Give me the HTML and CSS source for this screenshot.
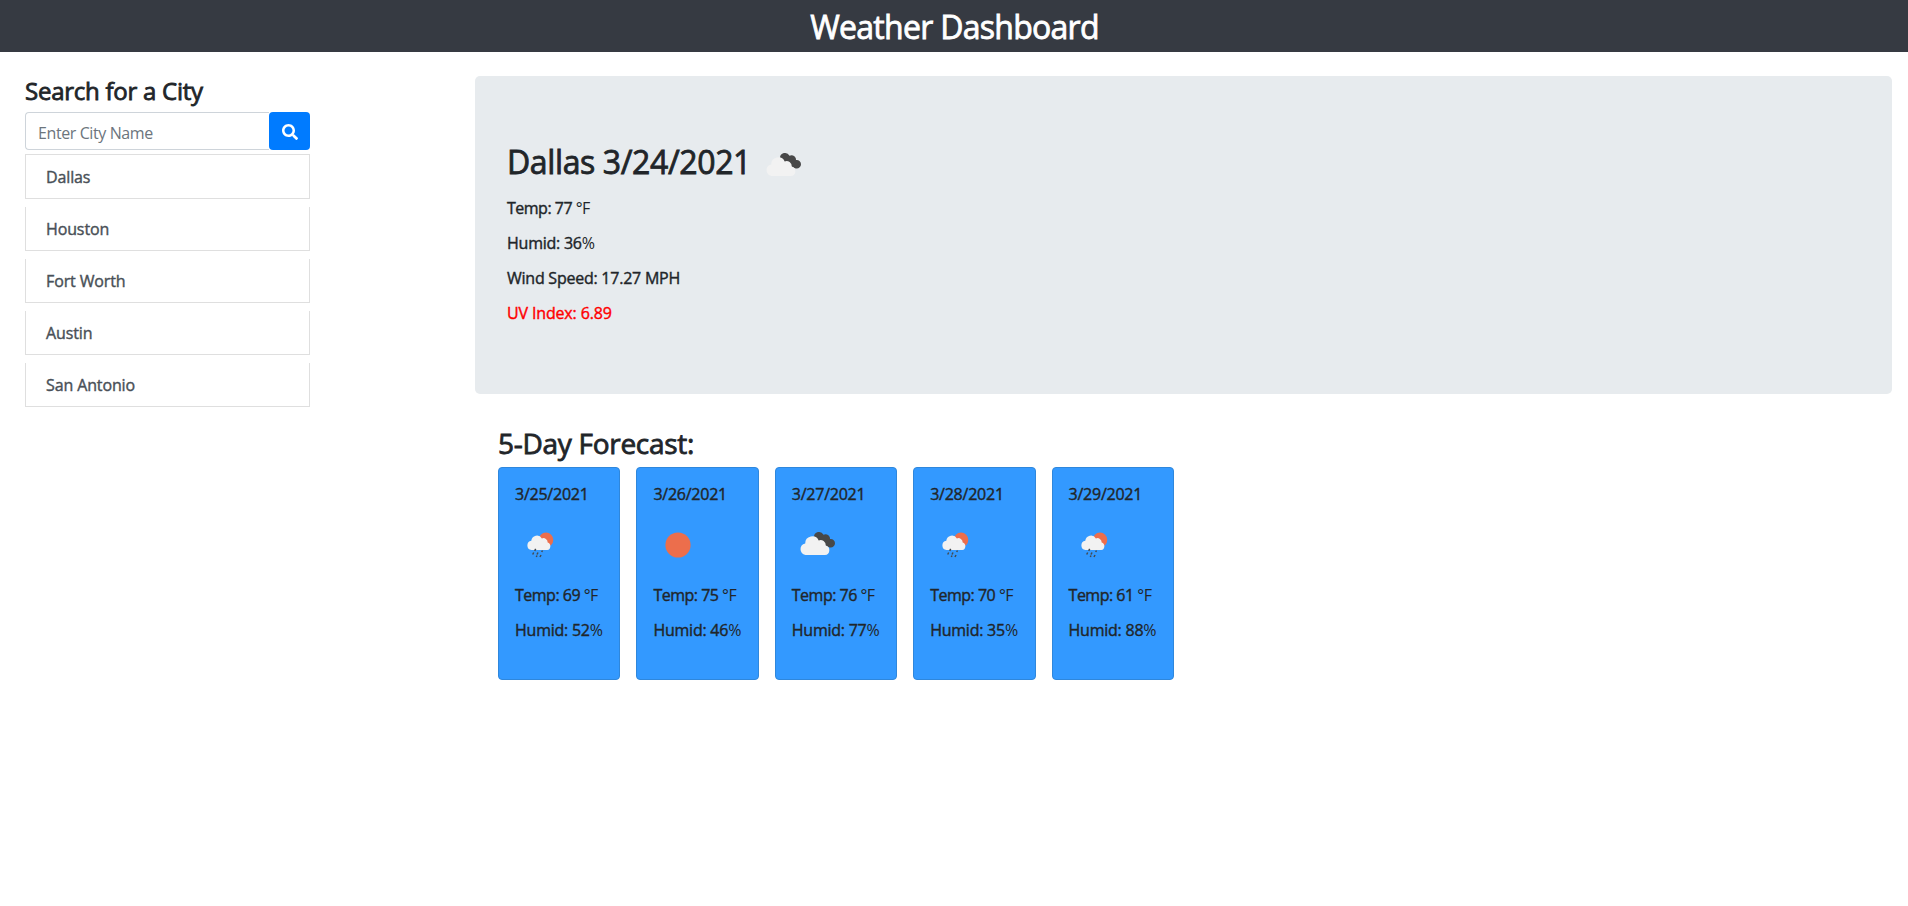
FILE: index.html
```html
<!DOCTYPE html>
<html lang="en">
<head>
<meta charset="utf-8">
<title>Weather Dashboard</title>
<link rel="stylesheet" href="styles.css">
</head>
<body>
<svg class="defs" aria-hidden="true">
  <symbol id="clouds" viewBox="0 0 50 50">
    <path fill="#484848" d="M22 17a5 5 0 0 1 9.500-2.200 4.500 4.500 0 0 1 6.500 4.300 4.200 4.200 0 0 1 5 4.200c0 3.200-3 5-6 4l-14-6z"/>
    <path fill="#f2f2f2" d="M13.500 35a5.900 5.900 0 0 1-.3-11.600 7.100 7.100 0 0 1 13.500-3 5.300 5.300 0 0 1 7.100 5.200 4.800 4.800 0 0 1-.8 9.400z"/>
  </symbol>
  <symbol id="rain" viewBox="0 0 50 50">
    <circle cx="31" cy="19.800" r="7.300" fill="#ec6e4c"/>
    <path fill="#f2f2f2" d="M16.500 30a4.700 4.700 0 0 1-.2-9.300 5.700 5.700 0 0 1 10.600-2.300 4.300 4.300 0 0 1 5.800 4.100 3.900 3.900 0 0 1-.4 7.500z"/>
    <path stroke="#444a50" stroke-width="1.500" d="M20.700 28.800l-1 2M18.700 32.500l-1 2M23 32.500l-1 2M27.500 30.500l-.8 1.500M22 35.500l-.7 1.500M26 35l-1 2"/>
  </symbol>
  <symbol id="sun" viewBox="0 0 50 50"><circle cx="25" cy="25" r="12.600" fill="#ec6e4c"/></symbol>
</svg>
<header class="topbar"><h1>Weather Dashboard</h1></header>
<main class="layout">
  <aside class="sidebar">
    <h2 class="search-title">Search for a City</h2>
    <form class="search">
      <input type="text" placeholder="Enter City Name" aria-label="City">
      <button type="button" aria-label="Search"><svg viewBox="0 0 512 512" width="16" height="16"><path fill="#fff" d="M505 442.700L405.300 343c-4.500-4.500-10.600-7-17-7H372c27.600-35.300 44-79.700 44-128C416 93.100 322.900 0 208 0S0 93.100 0 208s93.100 208 208 208c48.300 0 92.700-16.400 128-44v16.300c0 6.400 2.500 12.500 7 17l99.700 99.700c9.400 9.400 24.600 9.400 33.900 0l28.300-28.300c9.400-9.400 9.400-24.600.1-34zM208 336c-70.700 0-128-57.200-128-128 0-70.700 57.200-128 128-128 70.700 0 128 57.200 128 128 0 70.700-57.200 128-128 128z"/></svg></button>
    </form>
    <ul class="cities">
      <li>Dallas</li><li>Houston</li><li>Fort Worth</li><li>Austin</li><li>San Antonio</li>
    </ul>
  </aside>
  <section class="content">
    <article class="current">
      <div class="current-head"><h2>Dallas 3/24/2021</h2><svg class="icon"><use href="#clouds"/></svg></div>
      <p class="temp">Temp: 77 <span class="unit">°F</span></p>
      <p>Humid: 36<span class="pct">%</span></p>
      <p>Wind Speed: 17.27 MPH</p>
      <p class="uv">UV Index: 6.89</p>
    </article>
    <section class="forecast">
      <h2>5-Day Forecast:</h2>
      <div class="cards">
        <article class="card"><p>3/25/2021</p><svg class="icon"><use href="#rain"/></svg><p class="temp">Temp: 69 <span class="unit">°F</span></p><p>Humid: 52<span class="pct">%</span></p></article>
        <article class="card"><p>3/26/2021</p><svg class="icon"><use href="#sun"/></svg><p class="temp">Temp: 75 <span class="unit">°F</span></p><p>Humid: 46<span class="pct">%</span></p></article>
        <article class="card"><p>3/27/2021</p><svg class="icon"><use href="#clouds"/></svg><p class="temp">Temp: 76 <span class="unit">°F</span></p><p>Humid: 77<span class="pct">%</span></p></article>
        <article class="card"><p>3/28/2021</p><svg class="icon"><use href="#rain"/></svg><p class="temp">Temp: 70 <span class="unit">°F</span></p><p>Humid: 35<span class="pct">%</span></p></article>
        <article class="card"><p>3/29/2021</p><svg class="icon"><use href="#rain"/></svg><p class="temp">Temp: 61 <span class="unit">°F</span></p><p>Humid: 88<span class="pct">%</span></p></article>
      </div>
    </section>
  </section>
</main>
</body>
</html>
```
FILE: styles.css
```css
* { box-sizing: border-box; }
body { margin: 0; background: #fff; color: #212529; font: 400 16px/1.2 "Open Sans", "Noto Sans", sans-serif; }
h1, h2, p, ul { margin: 0; padding: 0; font-weight: 400; white-space: nowrap; }
h1, h2 { -webkit-text-stroke: 0.8px currentColor; }
p, li { -webkit-text-stroke: 0.4px currentColor; }
.defs { display: none; }
.topbar { height: 52px; background: #363a42; color: #fff; text-align: center; padding: 8px 0 0 1px; }
.topbar h1 { font-size: 32px; line-height: 38px; letter-spacing: -0.720px; }
.layout { display: flex; }
.sidebar { width: 310px; padding: 24px 0 0 25px; margin-right: 165px; flex: none; }
.search-title { font-size: 24px; line-height: 29px; margin-bottom: 7px; letter-spacing: -0.250px; }
.search { display: flex; height: 38px; }
.search input { width: 244px; border: 1px solid #ced4da; border-right: 0; border-radius: 4px 0 0 4px; padding: 3px 12px 0; font: 400 16px "Open Sans", sans-serif; letter-spacing: -0.400px; }
.search input::placeholder { color: #6c757d; opacity: 1; }
.search button { width: 41px; border: 0; border-radius: 4px; background: #007bff; padding: 2px 0 0; display: flex; align-items: center; justify-content: center; }
.cities { list-style: none; padding-top: 4px; display: grid; gap: 8px; color: #495057; letter-spacing: -0.120px; }
.cities li { height: 44px; border: 1px solid #dfdfdf; border-top: 0; padding: 11px 20px 0; line-height: 22px; }
.cities li:first-child { height: 45px; border-top: 1px solid #dfdfdf; }
.content { flex: 1; padding: 24px 16px 0 0; }
.current { height: 318px; border-radius: 5px; background: #e7ebee; padding: 65px 32px 0; }
.current-head { display: flex; align-items: center; height: 50px; margin-bottom: 8px; gap: 7px; }
.current-head h2 { font-size: 32px; line-height: 38px; margin-top: -8px; letter-spacing: -0.380px; }
.icon { display: block; width: 50px; height: 50px; }
.current p, .card p { line-height: 19px; margin-bottom: 16px; letter-spacing: -0.240px; }
.current .temp, .card .temp { letter-spacing: -0.500px; }
.current .uv { color: #f00; letter-spacing: -0.150px; }
.unit, .pct { -webkit-text-stroke: 0; }
.forecast { padding: 32px 0 0 23px; }
.forecast h2 { font-size: 28px; line-height: 34px; margin-bottom: 7px; letter-spacing: -0.280px; }
.cards { display: grid; grid-template-columns: repeat(5, 122.400px); gap: 16px; }
.card { height: 213px; border: 1px solid #2f87dc; border-radius: 4px; background: #3399ff; padding: 17px 16px 0; }
.card .icon { margin: 0 0 16px; }
```
